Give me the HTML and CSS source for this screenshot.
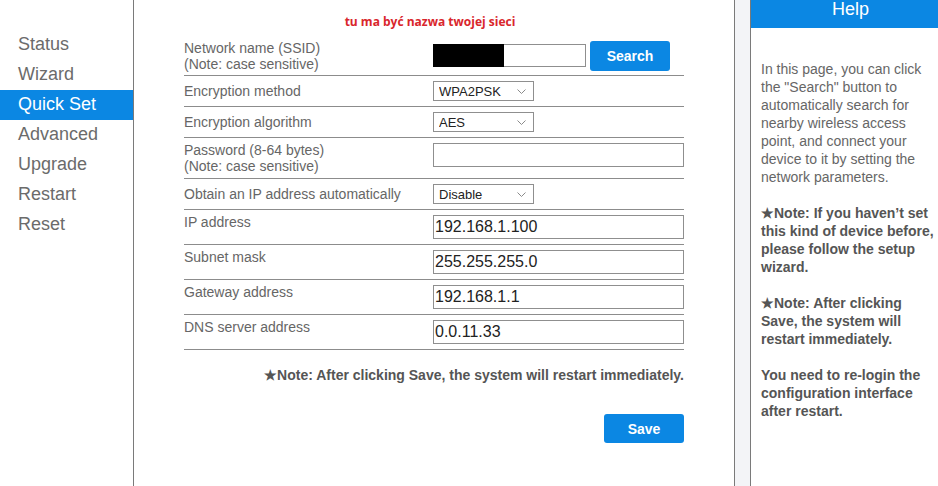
FILE: index.html
```html
<!DOCTYPE html>
<html lang="en">
<head>
  <meta charset="UTF-8">
  <title>Quick Set</title>
  <link rel="stylesheet" href="styles.css">
</head>
<body>

  <nav class="sidebar">
    <a href="#">Status</a>
    <a href="#">Wizard</a>
    <a href="#" class="active">Quick Set</a>
    <a href="#">Advanced</a>
    <a href="#">Upgrade</a>
    <a href="#">Restart</a>
    <a href="#">Reset</a>
  </nav>

  <main class="content">
    <form class="quick-form">
      <p class="hint">tu ma być nazwa twojej sieci</p>

      <div class="row row-ssid">
        <label>Network name (SSID)<br>(Note: case sensitive)</label>
        <div class="ctrl">
          <div class="ssid-field">
            <input type="text" class="field field-ssid" value="">
            <span class="redact"></span>
          </div>
          <button type="button" class="btn btn-search">Search</button>
        </div>
      </div>

      <div class="row row-select">
        <label>Encryption method</label>
        <div class="ctrl">
          <div class="select-wrap">
            <select class="select"><option>WPA2PSK</option></select>
            <svg class="chev" width="9" height="5" viewBox="0 0 9 5"><path d="M0.5 0.5 L4.5 4.5 L8.5 0.5" fill="none" stroke="#8a8a8a" stroke-width="1"/></svg>
          </div>
        </div>
      </div>

      <div class="row row-select">
        <label>Encryption algorithm</label>
        <div class="ctrl">
          <div class="select-wrap">
            <select class="select"><option>AES</option></select>
            <svg class="chev" width="9" height="5" viewBox="0 0 9 5"><path d="M0.5 0.5 L4.5 4.5 L8.5 0.5" fill="none" stroke="#8a8a8a" stroke-width="1"/></svg>
          </div>
        </div>
      </div>

      <div class="row row-text row-pass">
        <label>Password (8-64 bytes)<br>(Note: case sensitive)</label>
        <div class="ctrl">
          <input type="password" class="field">
        </div>
      </div>

      <div class="row row-select">
        <label>Obtain an IP address automatically</label>
        <div class="ctrl">
          <div class="select-wrap">
            <select class="select"><option>Disable</option></select>
            <svg class="chev" width="9" height="5" viewBox="0 0 9 5"><path d="M0.5 0.5 L4.5 4.5 L8.5 0.5" fill="none" stroke="#8a8a8a" stroke-width="1"/></svg>
          </div>
        </div>
      </div>

      <div class="row row-text">
        <label>IP address</label>
        <div class="ctrl"><input type="text" class="field" value="192.168.1.100"></div>
      </div>

      <div class="row row-text">
        <label>Subnet mask</label>
        <div class="ctrl"><input type="text" class="field" value="255.255.255.0"></div>
      </div>

      <div class="row row-text">
        <label>Gateway address</label>
        <div class="ctrl"><input type="text" class="field" value="192.168.1.1"></div>
      </div>

      <div class="row row-text">
        <label>DNS server address</label>
        <div class="ctrl"><input type="text" class="field" value="0.0.11.33"></div>
      </div>

      <p class="note">★Note: After clicking Save, the system will restart immediately.</p>

      <div class="actions">
        <button type="submit" class="btn btn-save">Save</button>
      </div>
    </form>
  </main>

  <div class="spacer"></div>

  <aside class="help">
    <h2>Help</h2>
    <div class="help-body">
      <p>In this page, you can click the "Search" button to automatically search for nearby wireless access point, and connect your device to it by setting the network parameters.</p>
      <p class="bold">★Note: If you haven’t set this kind of device before, please follow the setup wizard.</p>
      <p class="bold">★Note: After clicking Save, the system will restart immediately.</p>
      <p class="bold">You need to re-login the configuration interface after restart.</p>
    </div>
  </aside>

</body>
</html>
```

FILE: styles.css
```css
body {
  font-family: "Liberation Sans", Arial, sans-serif;
  margin: 0;
  padding: 0;
  background: #fff;
  color: #666;
  display: flex;
  height: 486px;
  overflow: hidden;
}

/* left menu */
.sidebar {
  width: 133px;
  border-right: 1px solid #7a7a7a;
  padding-top: 30px;
  display: flex;
  flex-direction: column;
  flex-shrink: 0;
}
.sidebar a {
  display: block;
  height: 30px;
  line-height: 29px;
  padding-left: 18px;
  font-size: 18px;
  color: #6b6b6b;
  text-decoration: none;
}
.sidebar a.active {
  background: #0b87e3;
  color: #fff;
}

/* settings form */
.content {
  flex-shrink: 0;
  border-right: 1px solid #7a7a7a;
  padding-left: 50px;
  box-sizing: border-box;
  width: 601px;
}
.quick-form {
  width: 500px;
}
.hint {
  margin: 0;
  padding: 14px 8px 0 0;
  height: 22px;
  line-height: 16px;
  text-align: center;
  font-family: "Open Sans", sans-serif;
  font-weight: 700;
  font-size: 12px;
  color: #d9262c;
}
.row {
  display: grid;
  grid-template-columns: 249px 251px;
  border-bottom: 1px solid #8c8c8c;
  height: 30px;
  align-items: center;
}
.row label {
  font-size: 14px;
  line-height: 16px;
  color: #666;
}
.row-ssid {
  height: 39px;
}
.row-text {
  height: 34px;
  align-items: start;
}
.row-text label {
  padding-top: 4px;
}
.row-text .field {
  margin-top: 5px;
}
.row-pass {
  height: 40px;
}
.ctrl {
  display: flex;
  align-items: center;
}

.field {
  width: 251px;
  height: 24px;
  box-sizing: border-box;
  border: 1px solid #8f8f8f;
  padding: 0 1px;
  font-family: "Liberation Sans", Arial, sans-serif;
  font-size: 16px;
  color: #222;
  outline: none;
}
.ssid-field {
  position: relative;
}
.field-ssid {
  width: 153px;
  height: 23px;
}
.redact {
  position: absolute;
  left: 0;
  top: 0;
  width: 71px;
  height: 23px;
  background: #000;
}

.select-wrap {
  position: relative;
  width: 101px;
}
.select {
  appearance: none;
  -webkit-appearance: none;
  width: 101px;
  height: 20px;
  box-sizing: border-box;
  border: 1px solid #8f8f8f;
  border-radius: 0;
  background: #fff;
  padding: 0 0 0 5px;
  font-family: "Liberation Sans", Arial, sans-serif;
  font-size: 13px;
  color: #222;
}
.chev {
  position: absolute;
  right: 8px;
  top: 8px;
}

.btn {
  display: inline-block;
  background-color: #0b87e3;
  color: #fff;
  border: none;
  border-radius: 3px;
  font-family: "Liberation Sans", Arial, sans-serif;
  font-weight: 700;
  font-size: 14px;
  cursor: pointer;
}
.btn-search {
  width: 80px;
  height: 30px;
  margin-left: 4px;
}

.note {
  margin: 17px 0 0;
  line-height: 16px;
  font-size: 14px;
  font-weight: 700;
  color: #555;
  text-align: right;
}
.actions {
  display: flex;
  justify-content: flex-end;
  margin-top: 31px;
}
.btn-save {
  width: 80px;
  height: 29px;
}

.spacer {
  width: 15px;
  flex-shrink: 0;
  background: #f3f4f7;
}

/* help panel */
.help {
  flex: 1;
  border-left: 1px solid #7a7a7a;
}
.help h2 {
  margin: 0;
  height: 28px;
  line-height: 18px;
  padding-left: 12px;
  background: #0b87e3;
  color: #fff;
  font-size: 18px;
  font-weight: 400;
  text-align: center;
}
.help-body {
  padding: 32px 3px 0 10px;
}
.help-body p {
  margin: 0 0 18px;
  font-size: 14px;
  line-height: 18px;
  color: #666;
}
.help-body p.bold {
  font-weight: 700;
  color: #555;
}
```
